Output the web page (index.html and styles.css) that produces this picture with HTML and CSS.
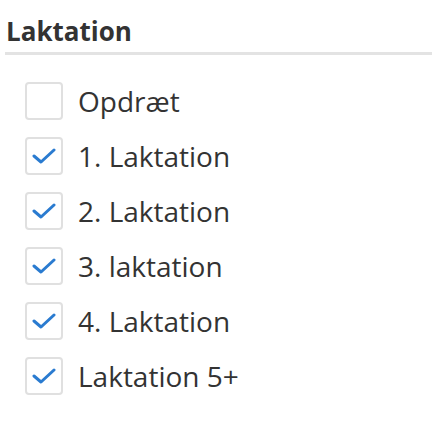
FILE: index.html
```html
<!DOCTYPE html>
<html>
<head>
<meta charset="utf-8">
<link rel="stylesheet" href="styles.css">
</head>
<body>
<section class="panel">
  <h2 class="title">Laktation</h2>
  <ul class="options">
    <li class="option"><span class="box"></span><span class="label">Opdræt</span></li>
    <li class="option"><span class="box checked"><svg viewBox="0 0 24 16"><path d="M2 8 L9 14 L22 2"/></svg></span><span class="label">1. Laktation</span></li>
    <li class="option"><span class="box checked"><svg viewBox="0 0 24 16"><path d="M2 8 L9 14 L22 2"/></svg></span><span class="label">2. Laktation</span></li>
    <li class="option"><span class="box checked"><svg viewBox="0 0 24 16"><path d="M2 8 L9 14 L22 2"/></svg></span><span class="label">3. laktation</span></li>
    <li class="option"><span class="box checked"><svg viewBox="0 0 24 16"><path d="M2 8 L9 14 L22 2"/></svg></span><span class="label">4. Laktation</span></li>
    <li class="option"><span class="box checked"><svg viewBox="0 0 24 16"><path d="M2 8 L9 14 L22 2"/></svg></span><span class="label">Laktation 5+</span></li>
  </ul>
</section>
</body>
</html>
```

FILE: styles.css
```css
html, body {
  margin: 0;
  padding: 0;
  background: #ffffff;
}
body {
  font-family: "Open Sans", "Noto Sans", sans-serif;
  color: #333333;
}
.panel {
  padding-top: 14px;
}
.title {
  margin: 0 0 0 5px;
  padding: 0 0 4px 1px;
  font-size: 26px;
  font-weight: 700;
  line-height: 34px;
  color: #333333;
  border-bottom: 3px solid #e3e3e3;
}
.options {
  list-style: none;
  margin: 0;
  padding: 18px 0 0 25px;
  display: flex;
  flex-direction: column;
}
.option {
  height: 55px;
  display: flex;
  align-items: center;
  gap: 15px;
}
.box {
  width: 34px;
  height: 34px;
  border: 2px solid #e0e0e0;
  border-radius: 4px;
  display: flex;
  align-items: center;
  justify-content: center;
  box-sizing: content-box;
}
.box svg {
  width: 24px;
  height: 16px;
  fill: none;
  stroke: #2a7bd0;
  stroke-width: 3;
  stroke-linecap: round;
  stroke-linejoin: round;
}
.label {
  font-size: 28px;
  line-height: 34px;
  color: #333333;
}
```
